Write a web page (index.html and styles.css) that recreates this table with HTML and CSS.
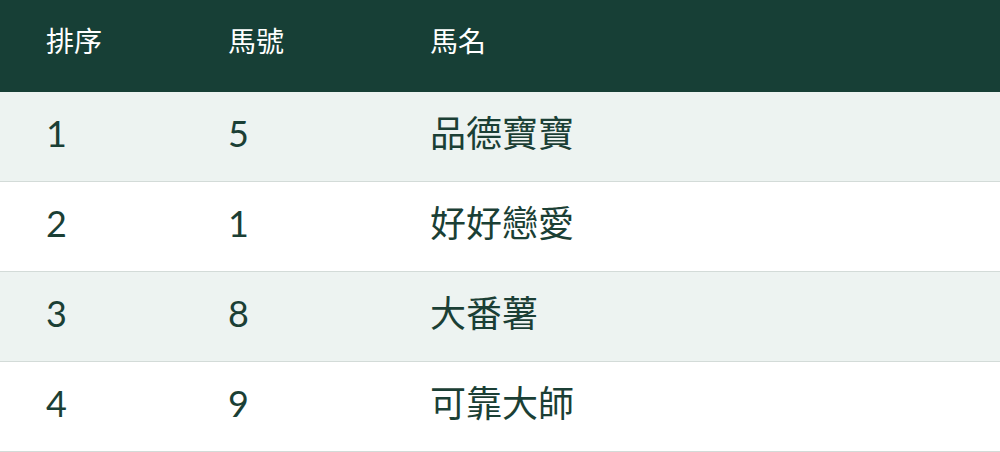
FILE: index.html
```html
<!DOCTYPE html>
<html lang="zh-Hant">
<head>
<meta charset="utf-8">
<link rel="stylesheet" href="styles.css">
</head>
<body>
<table class="race">
  <colgroup>
    <col class="col-rank">
    <col class="col-no">
    <col class="col-name">
  </colgroup>
  <thead>
    <tr><th>排序</th><th>馬號</th><th>馬名</th></tr>
  </thead>
  <tbody>
    <tr><td>1</td><td>5</td><td>品德寶寶</td></tr>
    <tr><td>2</td><td>1</td><td>好好戀愛</td></tr>
    <tr><td>3</td><td>8</td><td>大番薯</td></tr>
    <tr><td>4</td><td>9</td><td>可靠大師</td></tr>
  </tbody>
</table>
</body>
</html>
```
FILE: styles.css
```css
html, body {
  margin: 0;
  padding: 0;
  background: #ffffff;
}
.race {
  width: 1000px;
  table-layout: fixed;
  border-collapse: collapse;
  font-family: Lato, "Noto Sans CJK TC", sans-serif;
  color: #1b3f35;
}
.col-rank { width: 228px; }
.col-no { width: 202px; }
.race th {
  background: #173f36;
  color: #ffffff;
  font-weight: 400;
  font-size: 28px;
  line-height: 28px;
  text-align: left;
  height: 81px;
  padding: 0 0 11px 0;
}
.race td {
  font-size: 36px;
  line-height: 36px;
  height: 81px;
  padding: 0 0 8px 0;
  border-bottom: 1px solid #d3dbd8;
}
.race tbody tr:nth-child(odd) td {
  background: #edf3f1;
}
.race th:first-child, .race td:first-child {
  padding-left: 46px;
}
```
